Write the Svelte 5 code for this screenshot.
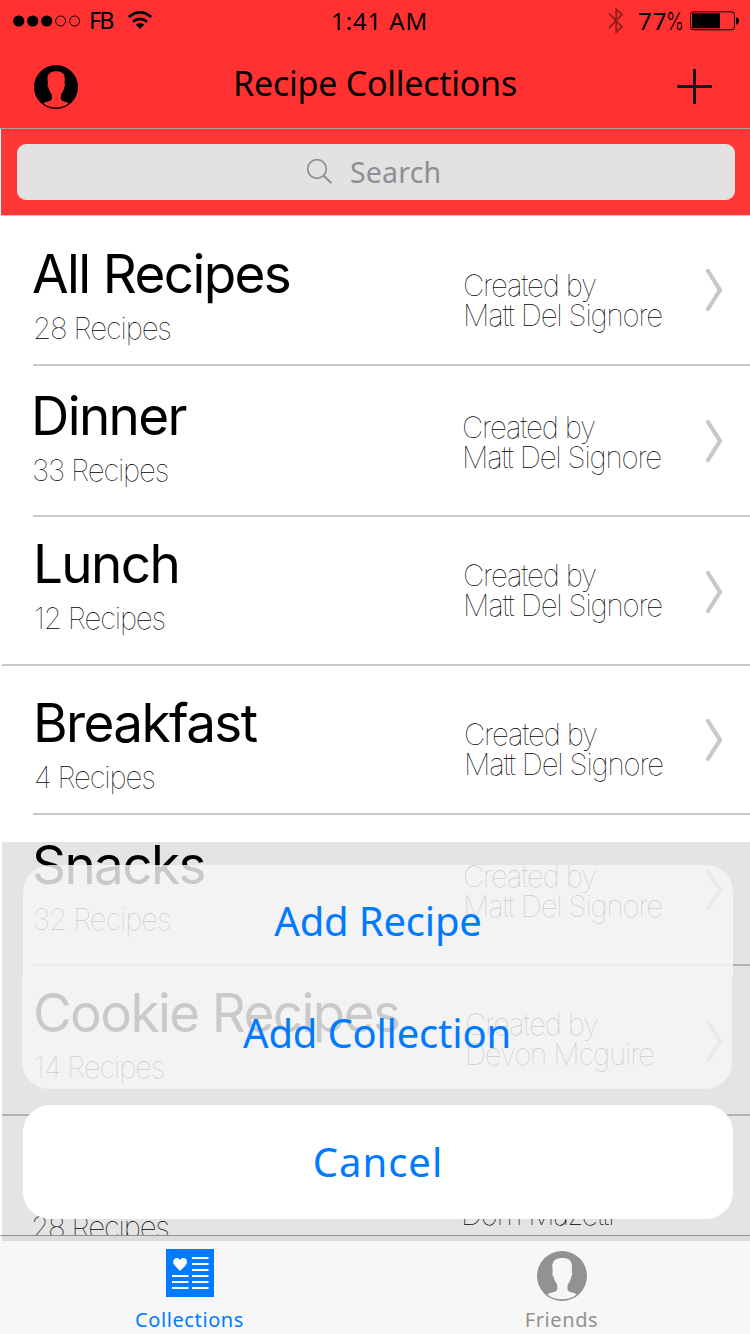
<script>
  const rows = [
    { height: 150, title: 'All Recipes', count: '28 Recipes', by: 'Created by', owner: 'Matt Del Signore', x: 32, top: 28, ownerX: 462, chevron: 53 },
    { height: 151, title: 'Dinner', count: '33 Recipes', by: 'Created by', owner: 'Matt Del Signore', x: 31, top: 20, ownerX: 461, chevron: 54 },
    { height: 149, title: 'Lunch', count: '12 Recipes', by: 'Created by', owner: 'Matt Del Signore', x: 33, top: 17, ownerX: 462, chevron: 54, full: true },
    { height: 149, title: 'Breakfast', count: '4 Recipes', by: 'Created by', owner: 'Matt Del Signore', x: 33, top: 27, ownerX: 463, chevron: 53 },
    { height: 151, title: 'Snacks', count: '32 Recipes', by: 'Created by', owner: 'Matt Del Signore', x: 32, top: 20, ownerX: 462, chevron: 54 },
    { height: 150, title: 'Cookie Recipes', count: '14 Recipes', by: 'Created by', owner: 'Devon Mcguire', x: 33, top: 17, ownerX: 464, chevron: 54, full: true },
    { height: 119, title: '', count: '28 Recipes', by: '', owner: 'Dom Mazetti', x: 30, top: 27, ownerX: 460, chevron: 0 }
  ];
</script>

{#snippet person(size, color)}
  <svg width={size} height={size} viewBox="0 0 50 50">
    <path fill={color} fill-rule="evenodd" d="M25 0a25 25 0 1 1 0 50a25 25 0 0 1 0-50ZM25.300 7C19 7 15.500 9.500 15.300 15L15.800 21.500C15 22 15.400 24.500 16.300 25.200C17 29.500 19.500 31.500 20.300 34V38.500C19.500 41.500 14 41 10.500 43.400C14.500 46.800 19.500 48.300 25 48.300C30.500 48.300 35.500 46.800 39.500 43.400C36 41 31 41.500 30.500 38.500V34.500C31.500 31.500 34 29.500 34.300 25.200C35.200 24.500 35.600 22 34.800 21.500L35 15C34.800 9.500 31.500 7 25.300 7Z" />
  </svg>
{/snippet}

<div class="screen">
  <header>
    <div class="status">
      <svg class="dots" width="68" height="12" viewBox="0 0 68 12">
        <circle cx="5.700" cy="6" r="5.600" /><circle cx="19.700" cy="6" r="5.600" /><circle cx="33.700" cy="6" r="5.600" />
        <g fill="none" stroke="#000"><circle cx="47.600" cy="6" r="5" /><circle cx="61.600" cy="6" r="5" /></g>
      </svg>
      <span class="carrier">FB</span>
      <svg class="wifi" width="24" height="19" viewBox="0 0 24 19">
        <g fill="none" stroke="#000" stroke-width="2.600"><path d="M.8 6Q12-3.400 23.200 6" /><path d="M4.800 10.800Q12 4.800 19.200 10.800" /></g>
        <path d="M7.600 13.600Q12 10.500 16.400 13.600L12 18Z" />
      </svg>
      <span class="time">1:41 AM</span>
      <svg class="bt" width="16" height="28" viewBox="0 0 16 28"><path d="M1 6.500L14 20L8.200 25.200V2.200L14 7.500L1 21" fill="none" stroke="#8e1c1c" stroke-width="1.700" /></svg>
      <span class="charge">77<i>%</i></span>
      <svg class="battery" width="50" height="20" viewBox="0 0 50 20"><rect x=".5" y=".8" width="44" height="18" rx="3" fill="none" stroke="#000" /><rect x="2" y="2.300" width="28" height="15" rx="1" /><path d="M46 6.500q3 .3 3 3.500t-3 3.500Z" /></svg>
    </div>
    <nav>
      <span class="avatar">{@render person(44, '#000')}</span>
      <h1>Recipe Collections</h1>
      <svg class="plus" width="36" height="36" viewBox="0 0 36 36"><path d="M.5 17.500H35M17.500 0V35" stroke="#101820" stroke-width="3" /></svg>
    </nav>
  </header>

  <div class="searchbar">
    <div class="field">
      <svg width="28" height="28" viewBox="0 0 28 28" fill="none" stroke="#8e8e93" stroke-width="1.700"><circle cx="11" cy="11" r="9.300" /><path d="M17.500 17.500L25.500 25.300" stroke-width="2" /></svg>
      <span>Search</span>
    </div>
  </div>

  <main>
    {#each rows as row}
      <section style="height:{row.height}px;grid-template-columns:{row.ownerX}px {705 - row.ownerX}px 1fr">
        <div class="names" style="padding:{row.top}px 0 0 {row.x}px">
          <h2>{row.title}</h2>
          <p>{row.count}</p>
        </div>
        <div class="owner" style="padding-top:{row.top + 26}px">
          <p>{row.by}</p>
          <p>{row.owner}</p>
        </div>
        {#if row.chevron}
          <svg class="chevron" style="margin-top:{row.chevron}px" width="19" height="43" viewBox="0 0 19 43"><path d="M3 2L15 21L3 40" fill="none" stroke="#c7c7cc" stroke-width="4.200" stroke-linecap="round" /></svg>
          <div class="rule" class:full={row.full}></div>
        {/if}
      </section>
    {/each}
  </main>

  <footer>
    <div class="tab active">
      <svg width="48" height="48" viewBox="0 0 48 48"><path fill="#007aff" d="M0 0h48v48H0z" /><path fill="#fff" d="M14 22L8.700 16.500C5 11.500 9 8.700 11 8.900Q13 9 14 11Q15 9 17.300 8.900C20 8.700 23 12 19.500 16.500Z" /><path stroke="#fff" stroke-width="2" d="M26 9h16.500M26 15h16.500M26 21h16.500M26 27h16.500M26 33h16.500M26 39h16.500M6 27h16.500M6 33h16.500M6 39h16.500" /></svg>
      <span>Collections</span>
    </div>
    <div class="tab friends">
      {@render person(50, '#929292')}
      <span>Friends</span>
    </div>
  </footer>

  <div class="overlay">
    <button class="first">Add Recipe</button>
    <button class="second">Add Collection</button>
    <button class="cancel">Cancel</button>
  </div>
</div>

<style>
  :global(body) { margin: 0; background: #fff; }
  .screen { position: relative; width: 750px; height: 1334px; overflow: hidden; background: #fff; color: #000; font-family: 'Noto Sans', 'Open Sans', sans-serif; display: flex; flex-direction: column; }
  h1, h2, p { margin: 0; font-weight: 400; white-space: nowrap; }
  svg { display: block; flex: none; }
  header { height: 128px; background: #ff3131; border-bottom: 1px solid #bd9c9c; flex: none; }
  .status { height: 42px; display: flex; align-items: flex-start; font-size: 24px; line-height: 41px; white-space: nowrap; }
  .dots { margin: 15px 0 0 13px; }
  .carrier { width: 39px; padding-left: 8px; font-size: 23.500px; letter-spacing: -2px; }
  .wifi { margin-top: 11px; }
  .time { width: 276px; padding-left: 179px; box-sizing: border-box; margin-right: 180px; letter-spacing: .9px; }
  .bt { margin-top: 7px; }
  .charge { width: 52px; padding-left: 14px; letter-spacing: 1px; }
  .charge i { display: inline-block; margin-left: -1px; font: 300 24px 'Inter', sans-serif; letter-spacing: 0; transform: scaleX(.8); transform-origin: left; }
  .battery { margin-top: 11px; }
  nav { height: 86px; display: grid; grid-template-columns: 198px 354px 198px; }
  .avatar { padding: 23px 0 0 34px; }
  h1 { font-size: 34px; line-height: 82px; text-align: center; letter-spacing: -.25px; }
  .plus { margin: 27px 0 0 125px; }
  .searchbar { height: 86px; flex: none; box-sizing: border-box; margin-left: 1px; padding: 15px 15px 0 16px; background: #ff3636; box-shadow: 0 1px #c8c7cc; }
  .field { height: 56px; border-radius: 9px; background: #e2e2e2; display: flex; align-items: flex-start; padding-left: 289px; color: #8e8e93; font-size: 28.500px; line-height: 56px; }
  .field svg { margin-top: 14px; }
  .field span { margin-left: 16px; letter-spacing: .2px; }
  main { height: 1019px; padding-top: 1px; flex: none; overflow: hidden; font-family: 'Inter', sans-serif; }
  section { position: relative; display: grid; }
  h2 { height: 60px; font-size: 53px; line-height: 60px; letter-spacing: -1.600px; }
  p { height: 30px; font-size: 29.500px; line-height: 30px; font-weight: 100; letter-spacing: -1.200px; }
  .names p { margin-top: 9px; padding-left: 1px; }
  .owner p { padding-left: 1px; }
  .rule { position: absolute; left: 33px; right: 0; bottom: 0; height: 2px; background: #c8c7cc; }
  .rule.full { left: 2px; }
  footer { height: 98px; flex: none; border-top: 1px solid #a3a3a3; background: #f7f7f7; display: grid; grid-template-columns: 379px 365px; font-size: 20px; line-height: 26px; color: #929292; }
  .tab { display: flex; flex-direction: column; align-items: center; }
  .active { color: #007aff; padding-top: 13px; }
  .active span { margin-top: 10px; }
  .friends { padding-top: 15px; }
  .friends span { margin-top: 6px; }
  .tab span { letter-spacing: .6px; }
  .overlay { position: absolute; left: 2px; right: 0; top: 842px; height: 399px; box-sizing: border-box; padding: 23px 17px 0 21px; background: rgba(0, 0, 0, .106); }
  button { display: block; width: 710px; height: 112px; border: 0; padding: 0; background: rgba(246, 246, 246, .815); color: #007aff; font: 400 40px/112px 'Noto Sans', sans-serif; letter-spacing: -.2px; }
  .first { border-radius: 27px 27px 0 0; }
  .second { border-radius: 0 0 27px 27px; margin-left: -1px; }
  .cancel { margin-top: 16px; height: 114px; border-radius: 27px; background: #fff; letter-spacing: 1px; }
</style>
